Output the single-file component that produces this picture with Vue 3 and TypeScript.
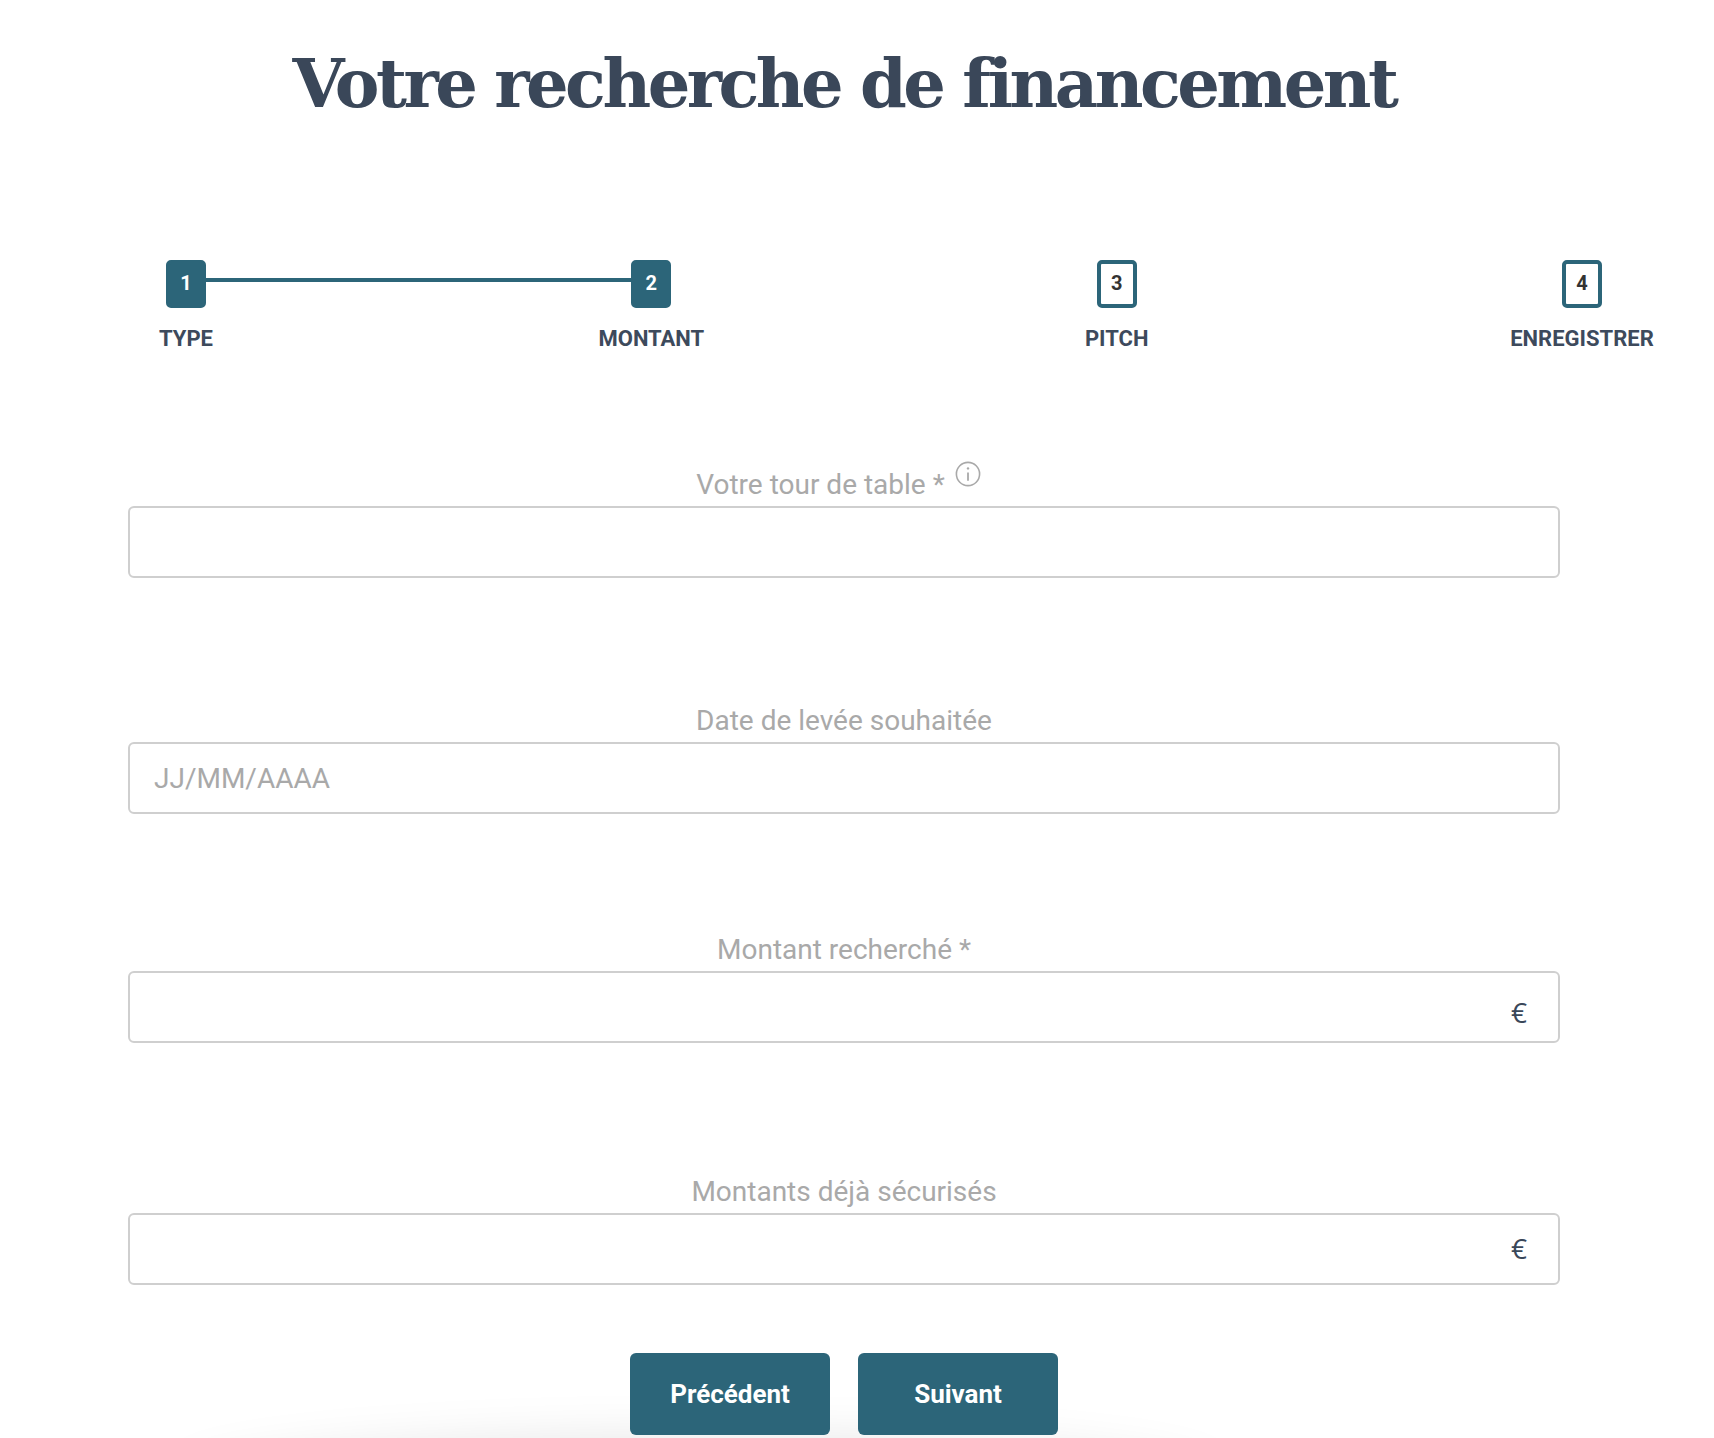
<script setup lang="ts">
const steps = [
  { num: 1, label: "TYPE", done: true },
  { num: 2, label: "MONTANT", done: true },
  { num: 3, label: "PITCH", done: false },
  { num: 4, label: "ENREGISTRER", done: false },
]

const fields = [
  { id: "tour", label: "Votre tour de table *", info: true, placeholder: "", suffix: false },
  { id: "date", label: "Date de levée souhaitée", info: false, placeholder: "JJ/MM/AAAA", suffix: false },
  { id: "montant", label: "Montant recherché *", info: false, placeholder: "", suffix: true },
  { id: "securises", label: "Montants déjà sécurisés", info: false, placeholder: "", suffix: true },
]
</script>

<template>
  <div class="page">
    <h1 class="title">Votre recherche de financement</h1>

    <ol class="steps">
      <li v-for="step in steps" :key="step.num" class="step">
        <span :class="['box', { done: step.done }]">{{ step.num }}</span>
        <span class="step-label">{{ step.label }}</span>
      </li>
      <li class="connector" aria-hidden="true"></li>
    </ol>

    <form class="form" @submit.prevent>
      <div v-for="field in fields" :key="field.id" :class="['field', `field-${field.id}`]">
        <label class="label" :for="field.id">
          {{ field.label }}
          <svg v-if="field.info" class="info" width="26" height="26" viewBox="0 0 26 26" fill="none">
            <circle cx="13" cy="13" r="11.6" stroke="#a9a9a9" stroke-width="1.6" />
            <path d="M13 11.4v8.4" stroke="#a9a9a9" stroke-width="1.8" />
            <circle cx="13" cy="7.4" r="1.2" fill="#a9a9a9" />
          </svg>
        </label>
        <div class="control">
          <input :id="field.id" class="input" type="text" :placeholder="field.placeholder" />
          <span v-if="field.suffix" class="suffix">€</span>
        </div>
      </div>

      <div class="actions">
        <button class="btn" type="button">Précédent</button>
        <button class="btn" type="submit">Suivant</button>
      </div>
    </form>

    <div class="bottom-shadow" aria-hidden="true"></div>
  </div>
</template>

<style scoped>
.page {
  position: relative;
  width: 1714px;
  height: 1438px;
  overflow: hidden;
  background: #fff;
  font-family: Roboto, "Liberation Sans", sans-serif;
}
.title {
  margin: 0;
  padding-top: 39px;
  width: 1688px;
  height: 89px;
  text-align: center;
  font-family: "DejaVu Serif", serif;
  font-size: 67px;
  line-height: 89px;
  font-weight: 700;
  letter-spacing: -3.5px;
  color: #3a4759;
}
.steps {
  position: relative;
  display: flex;
  justify-content: space-between;
  list-style: none;
  margin: 132px 0 0 114px;
  padding: 0;
  width: 1540px;
}
.step {
  width: 144px;
  display: flex;
  flex-direction: column;
  align-items: center;
}
.box {
  box-sizing: border-box;
  width: 40px;
  height: 48px;
  padding-bottom: 2px;
  display: flex;
  align-items: center;
  justify-content: center;
  border: 4px solid #2c6579;
  border-radius: 5px;
  font-size: 20px;
  font-weight: 700;
  color: #333;
}
.box.done {
  background: #2c6579;
  color: #fff;
}
.step-label {
  margin-top: 18px;
  font-size: 22px;
  line-height: 26px;
  font-weight: 700;
  color: #3d4a5c;
  white-space: nowrap;
}
.connector {
  position: absolute;
  left: 92px;
  top: 18px;
  width: 426px;
  height: 4px;
  background: #2c6579;
}
.form {
  margin: 0 0 0 128px;
  width: 1432px;
}
.field {
  display: flex;
  flex-direction: column;
}
.field-tour {
  margin-top: 114px;
}
.field-date {
  margin-top: 124px;
}
.field-montant {
  margin-top: 117px;
}
.field-securises {
  margin-top: 130px;
}
.label {
  display: flex;
  gap: 0.25em;
  align-self: center;
  height: 40px;
  font-size: 28px;
  line-height: 38px;
  color: #a9a9a9;
  white-space: nowrap;
}
.info {
  align-self: center;
  margin: 0 11px 0 3px;
  transform: translateY(-12px);
}
.control {
  position: relative;
}
.input {
  display: block;
  box-sizing: border-box;
  width: 100%;
  height: 72px;
  padding: 0 24px;
  border: 2px solid #cfcfcf;
  border-radius: 6px;
  outline: none;
  background: #fff;
  font-family: Roboto, "Liberation Sans", sans-serif;
  font-size: 28px;
  color: #3a4759;
}
.input::placeholder {
  color: #a9a9a9;
  opacity: 1;
}
.suffix {
  position: absolute;
  right: 33px;
  font-family: "Open Sans", sans-serif;
  font-size: 28px;
  line-height: 36px;
  color: #3a4759;
}
.field-montant .suffix {
  top: 23px;
}
.field-securises .suffix {
  top: 17px;
}
.actions {
  display: flex;
  justify-content: center;
  gap: 28px;
  margin-top: 68px;
}
.btn {
  position: relative;
  z-index: 1;
  width: 200px;
  height: 82px;
  border: none;
  border-radius: 6px;
  background: #2c6579;
  color: #fff;
  font-family: Roboto, "Liberation Sans", sans-serif;
  font-size: 26px;
  font-weight: 700;
}
.bottom-shadow {
  position: absolute;
  left: 200px;
  top: 1458px;
  width: 1000px;
  height: 60px;
  border-radius: 50%;
  box-shadow: 0 0 50px 20px rgba(0, 0, 0, 0.1);
}
</style>
